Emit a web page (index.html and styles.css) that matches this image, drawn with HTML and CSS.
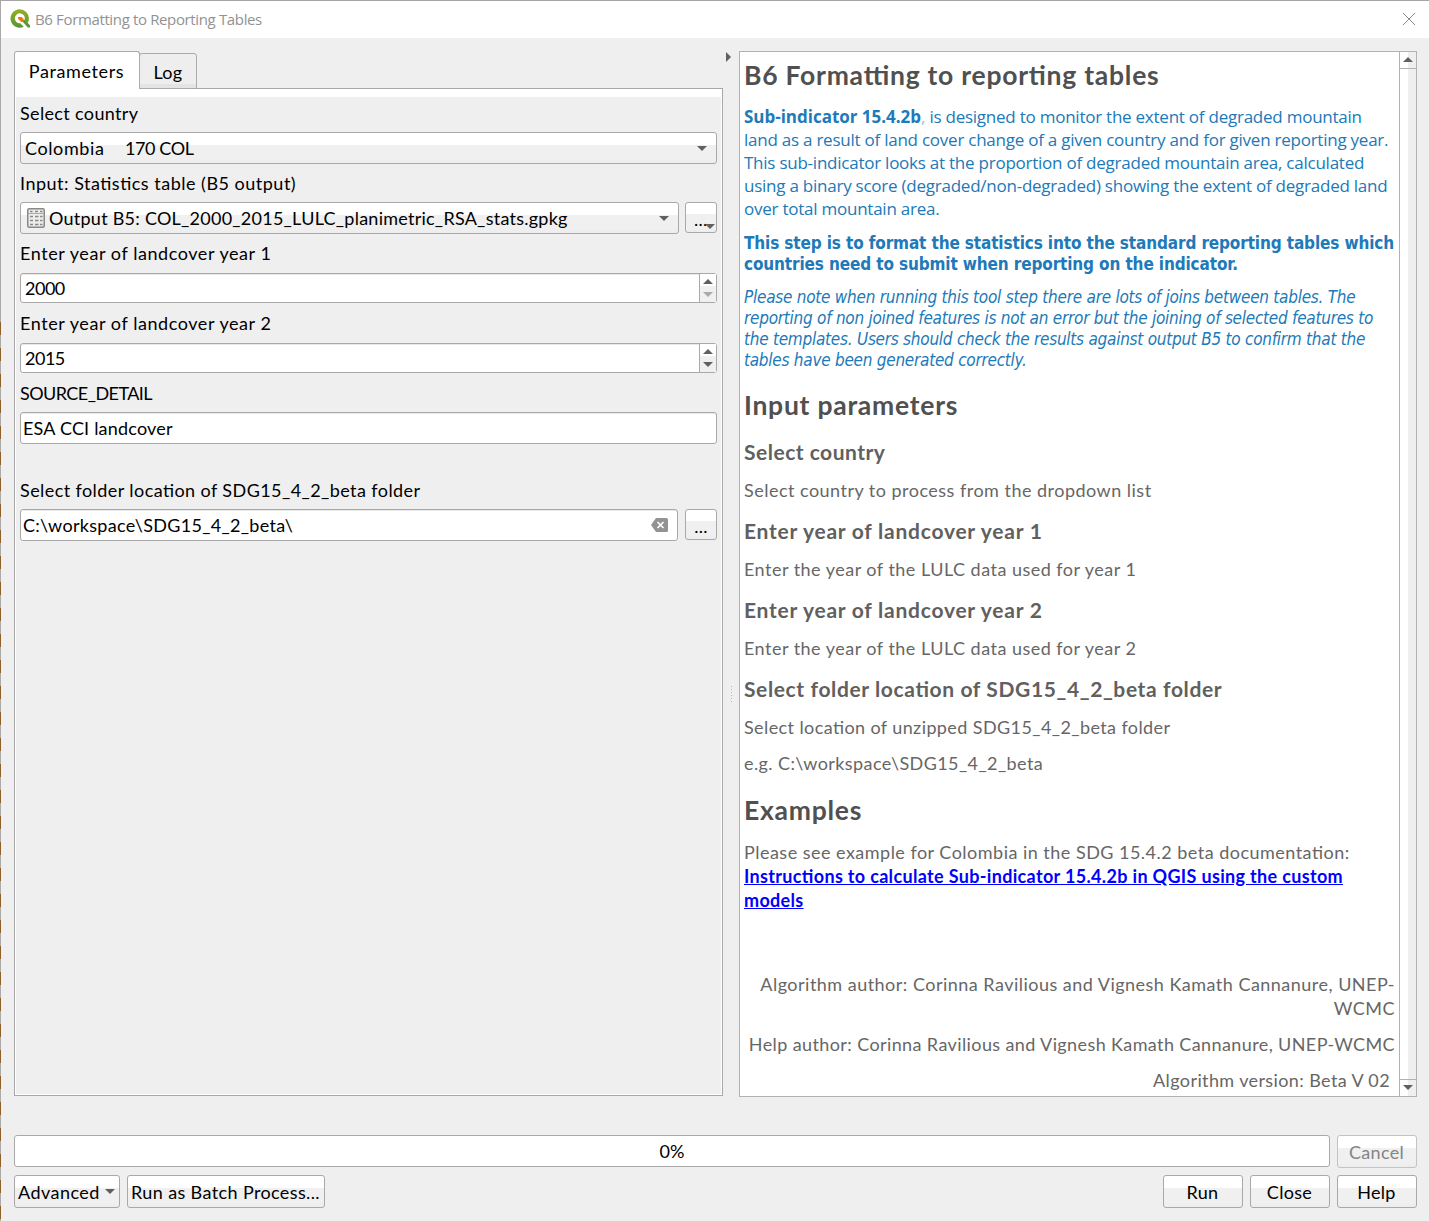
FILE: index.html
```html
<!DOCTYPE html>
<html lang="en">
<head>
<meta charset="utf-8">
<title>B6 Formatting to Reporting Tables</title>
<link rel="stylesheet" href="styles.css">
</head>
<body>
<div class="dialog">
  <header class="titlebar">
    <svg class="logo" width="20" height="20" viewBox="0 0 20 20"><defs><linearGradient id="g" x1="0" y1="0" x2="0" y2="1"><stop offset="0" stop-color="#93b023"/><stop offset="1" stop-color="#589632"/></linearGradient></defs><path fill="url(#g)" fill-rule="evenodd" d="M9.700.300a9.200 9.200 0 0 1 9.200 9.200c0 1.700-.400 3.200-1.200 4.500l-3.200-3a5 5 0 1 0-4.200 3.300l3.400 3.500A9.200 9.200 0 1 1 9.700.300z"/><path fill="#589632" d="M11.200 11.100h3.700l5.100 5.200v2.200h-2.200z"/><path fill="#ee7913" d="M8 8h3.600l2 2.100v2.800h-2.300L8 9.700z"/></svg>
    <span class="window-title">B6 Formatting to Reporting Tables</span>
    <svg class="close" width="14" height="14" viewBox="0 0 14 14"><path d="M1 1l12 12M13 1L1 13" stroke="#8a8a8a" fill="none"/></svg>
  </header>
  <main class="content">
    <section class="left">
      <nav class="tabs"><div class="tab active">Parameters</div><div class="tab log">Log</div></nav>
      <div class="panel"><div class="form">
        <label class="s1">Select country</label>
        <div class="combo"><span class="country">Colombia</span><span class="code">170 COL</span><i class="down"></i></div>
        <label class="s3">Input: Statistics table (B5 output)</label>
        <div class="row source">
          <div class="combo layer"><svg width="18" height="20" viewBox="0 0 18 20"><rect x=".75" y=".75" width="16.5" height="18.5" rx="1.5" fill="#ededeb" stroke="#888a85" stroke-width="1.5"/><path d="M1 5.500h16" stroke="#aaa"/><path d="M3 3.500h2.500M8 3.500h3M13 3.500h2.500M3 8.500h3M8 8.500h3.500M13 8.500h2.500M3 12.500h3M8 12.500h3.500M13 12.500h2.500M3 16.500h3M8 16.500h3.500M13 16.500h2.500" stroke="#888a85" stroke-width="1.3"/></svg><span class="s4">Output B5: COL_2000_2015_LULC_planimetric_RSA_stats.gpkg</span><i class="down"></i></div>
          <div class="more menu">...<i class="down"></i></div>
        </div>
        <label class="s5">Enter year of landcover year 1</label>
        <div class="spin"><span>2000</span><div class="steps"><i class="up"></i><i class="down off"></i></div></div>
        <label class="s5">Enter year of landcover year 2</label>
        <div class="spin"><span>2015</span><div class="steps"><i class="up"></i><i class="down"></i></div></div>
        <label class="s6">SOURCE_DETAIL</label>
        <div class="edit"><span class="s7">ESA CCI landcover</span></div>
        <label class="folder s8">Select folder location of SDG15_4_2_beta folder</label>
        <div class="row">
          <div class="edit path"><span class="s9">C:\workspace\SDG15_4_2_beta\</span><svg width="17" height="14" viewBox="0 0 17 14"><path d="M5 0h10.500q1.500 0 1.500 1.500v11q0 1.500-1.500 1.500H5L0 7z" fill="#939393"/><path d="M6.500 4l6 6M12.500 4l-6 6" stroke="#fff" stroke-width="1.600"/></svg></div>
          <div class="more">...</div>
        </div>
      </div></div>
    </section>
    <div class="splitter"><i class="right"></i><div class="grip"></div></div>
    <section class="help">
      <article>
        <h1>B6 Formatting to reporting tables</h1>
        <p class="intro"><b>Sub-indicator 15.4.2b</b><span class="comma">,</span> is designed to monitor the extent of degraded mountain<br>land as a result of land cover change of a given country and for given reporting year.<br>This sub-indicator looks at the proportion of degraded mountain area, calculated<br>using a binary score (degraded/non-degraded) showing the extent of degraded land<br>over total mountain area.</p>
        <p class="step">This step is to format the statistics into the standard reporting tables which<br>countries need to submit when reporting on the indicator.</p>
        <p class="note">Please note when running this tool step there are lots of joins between tables. The<br>reporting of non joined features is not an error but the joining of selected features to<br>the templates. Users should check the results against output B5 to confirm that the<br>tables have been generated correctly.</p>
        <h2>Input parameters</h2>
        <h3 class="first">Select country</h3>
        <p>Select country to process from the dropdown list</p>
        <h3>Enter year of landcover year 1</h3>
        <p>Enter the year of the LULC data used for year 1</p>
        <h3>Enter year of landcover year 2</h3>
        <p>Enter the year of the LULC data used for year 2</p>
        <h3 class="long">Select folder location of SDG15_4_2_beta folder</h3>
        <p class="tight">Select location of unzipped SDG15_4_2_beta folder</p>
        <p class="next tight">e.g. C:\workspace\SDG15_4_2_beta</p>
        <h2 class="examples">Examples</h2>
        <p class="example">Please see example for Colombia in the SDG 15.4.2 beta documentation:<br><a>Instructions to calculate Sub-indicator 15.4.2b in QGIS using the custom<br>models</a></p>
        <p class="author">Algorithm author: Corinna Ravilious and Vignesh Kamath Cannanure, UNEP-<br>WCMC</p>
        <p class="next end">Help author: Corinna Ravilious and Vignesh Kamath Cannanure, UNEP-WCMC</p>
        <p class="next end version">Algorithm version: Beta V 02</p>
      </article>
      <div class="scroll"><div class="cap top"><i class="up"></i></div><div class="track"></div><div class="cap bottom"><i class="down"></i></div></div>
    </section>
  </main>
  <footer>
    <div class="row"><div class="progress">0%</div><div class="button disabled">Cancel</div></div>
    <div class="row actions"><div class="button advanced">Advanced<i class="down"></i></div><div class="button batch">Run as Batch Process...</div><div class="space"></div><div class="button">Run</div><div class="button">Close</div><div class="button">Help</div></div>
  </footer>
</div>
</body>
</html>
```
FILE: styles.css
```css
* { box-sizing: border-box; }
body { margin: 0; width: 1429px; height: 1221px; overflow: hidden; background: #efefef; font: 18px/24px Lato, sans-serif; font-feature-settings: "liga" 1; color: #000; }
.dialog { height: 1221px; display: flex; flex-direction: column; white-space: nowrap; border-top: 1px solid #a5a5a5; background: linear-gradient(#a9a9a9, #a9a9a9) 0 0 / 1px 321px no-repeat, repeating-linear-gradient(#90602b 0 13px, #aaa 13px 26px) 0 321px / 1px 900px no-repeat; }
.titlebar { height: 37px; margin-left: 1px; background: #fff; display: flex; align-items: center; padding: 0 13px 0 9px; }
.logo { margin: -2px 5px 0 0; }
.close { margin-top: -1px; }
.window-title { flex: 1; margin-top: -2px; font: 15px/20px "Open Sans", sans-serif; letter-spacing: -.36px; color: #929292; }
.content { display: flex; padding: 13px 12px 0 14px; height: 1059px; }
.left { width: 709px; height: 1045px; display: flex; flex-direction: column; }
.tabs { position: relative; height: 38px; display: flex; align-items: flex-start; margin-bottom: -1px; }
.tab { border: 1px solid #ababab; border-radius: 3px 3px 0 0; text-align: center; padding-top: 7px; }
.active { width: 126px; height: 38px; background: #fff; border-bottom: 0; letter-spacing: .6px; padding-right: 1px; }
.log { width: 58px; height: 36px; margin: 2px 0 0 -1px; padding-top: 6px; background: linear-gradient(#eee 0 30px, #e4e4e4 30px); letter-spacing: .3px; }
.panel { flex: 1; border: 1px solid #a8a8a8; background: #fff; padding: 8px 1px 1px; }
.form { height: 100%; background: #efefef; padding: 0 4px; display: flex; flex-direction: column; }
label { display: block; height: 24px; margin: 4px 0 7px; }
.combo + label, .row + label { margin-top: 7px; }
.row { display: flex; gap: 7px; }
.source { gap: 6px; }
.combo, .button, .more { border: 1px solid #a9a9a9; border-radius: 3px; background: linear-gradient(#fff 0 39%, #f0f0f0 39% 85%, #ededed); }
.combo { height: 32px; display: flex; align-items: center; justify-content: space-between; padding: 0 9px 0 4px; flex: none; }
.country { width: 100px; letter-spacing: .6px; }
.code { flex: 1; letter-spacing: -.4px; }
.layer { width: 659px; padding-left: 6px; }
.layer svg { margin-right: 4px; }
.s4 { flex: 1; letter-spacing: .25px; }
.more { width: 32px; height: 31px; text-align: center; padding-top: 4px; letter-spacing: .3px; flex: none; }
.menu { display: flex; padding: 4px 0 0 8px; }
.menu .down { margin: 17px 0 0 -3px; }
i { display: block; width: 0; height: 0; flex: none; border: 5px solid transparent; }
.down { border-top-color: #606060; border-bottom: 0; }
.up { border-bottom-color: #606060; border-top: 0; }
.off { border-top-color: #aaa; }
.spin { height: 30px; border: 1px solid #a9a9a9; border-radius: 3px; background: #fff; display: flex; padding-left: 4px; justify-content: space-between; flex: none; box-shadow: inset 0 1px #e9e9e9; }
.spin span { padding-top: 2px; letter-spacing: -.5px; }
.steps { width: 17px; border-left: 1px solid #aaa; display: flex; flex-direction: column; align-items: center; justify-content: space-between; padding: 5px 1px 5px 0; background: linear-gradient(#fff 43%, #f0f0f0 43%); }
.row + .s5 { margin: 7px 0 8px; }
.spin + label { margin: 8px 0; }
.spin + .s6 { margin-bottom: 7px; }
.edit { height: 32px; border: 1px solid #a9a9a9; border-radius: 3px; background: #fff; padding: 3px 2px; flex: none; box-shadow: inset 0 1px #e9e9e9; }
.folder { margin: 34px 0 7px; }
.path { width: 658px; display: flex; align-items: center; justify-content: space-between; padding-right: 9px; }
.s1 { letter-spacing: .35px; }
.s3 { letter-spacing: .5px; }
.s5 { letter-spacing: .57px; }
.s6 { letter-spacing: -.55px; }
.s7 { letter-spacing: .2px; }
.s8 { letter-spacing: .42px; }
.s9 { letter-spacing: .3px; }
.splitter { width: 16px; display: flex; flex-direction: column; padding: 1px 0 0 3px; }
.right { border-left-color: #606060; border-right: 0; }
.grip { width: 1px; height: 17px; margin: 624px 0 0 5px; background: repeating-linear-gradient(#b5b5b5 0 1px, transparent 1px 3px); }
.help { width: 678px; height: 1046px; border: 1px solid #b2b2b2; display: flex; background: #fff; flex: none; }
article { flex: 1; min-width: 0; padding: 7px 4px 0; color: #666; letter-spacing: .48px; }
h1, h2, h3, p { margin: 0; }
h1, h2 { color: #505050; font-size: 26.5px; line-height: 32px; letter-spacing: .75px; }
h2 { margin-top: 18px; }
h3 { color: #606060; font-size: 21px; line-height: 26px; margin: 16px 0 13px; letter-spacing: .75px; }
.first { margin-top: 18px; letter-spacing: .5px; }
.long { letter-spacing: .62px; }
.tight { letter-spacing: .4px; }
.intro { margin-top: 14px; color: #2079b8; font: 17px/23px "Open Sans", sans-serif; letter-spacing: -.24px; }
.intro b { letter-spacing: -.02px; }
.comma { color: #9dbfe0; }
.step { margin-top: 13px; color: #2079b8; font: bold 17px/21px "DejaVu Sans Condensed", "DejaVu Sans", sans-serif; letter-spacing: -.13px; }
.note { margin-top: 12px; color: #2079b8; font: italic 17px/21px "DejaVu Sans Condensed", "DejaVu Sans", sans-serif; letter-spacing: -.25px; }
.next { margin-top: 12px; }
.examples { margin-top: 19px; }
.example { margin-top: 14px; }
a { color: #00f; font-weight: bold; text-decoration: underline; letter-spacing: .33px; }
.author { margin-top: 60px; text-align: right; letter-spacing: .48px; }
.end { text-align: right; letter-spacing: .39px; }
.version { padding-right: 5px; }
.scroll { width: 17px; flex: none; border-left: 1px solid #b2b2b2; display: flex; flex-direction: column; background: linear-gradient(90deg, #fff 50%, #efefef 50%); }
.cap { height: 17px; display: flex; align-items: center; justify-content: center; padding-bottom: 2px; }
.top { border-bottom: 1px solid #b2b2b2; }
.bottom { border-top: 1px solid #b2b2b2; }
.track { flex: 1; }
footer { padding: 38px 12px 0 14px; }
.progress { width: 1316px; height: 32px; border: 1px solid #a9a9a9; border-radius: 3px; background: #fff; text-align: center; padding-top: 3px; }
.button { width: 80px; height: 33px; text-align: center; padding: 4px 1px 0 0; letter-spacing: .3px; }
.disabled { color: #848484; border-color: #c3c3c3; }
.actions { margin-top: 7px; }
.advanced { width: 106px; display: flex; justify-content: space-between; padding: 4px 4px 0 3px; letter-spacing: .45px; }
.advanced .down { margin-top: 9px; }
.batch { width: 198px; letter-spacing: .38px; }
.space { flex: 1; }
```
